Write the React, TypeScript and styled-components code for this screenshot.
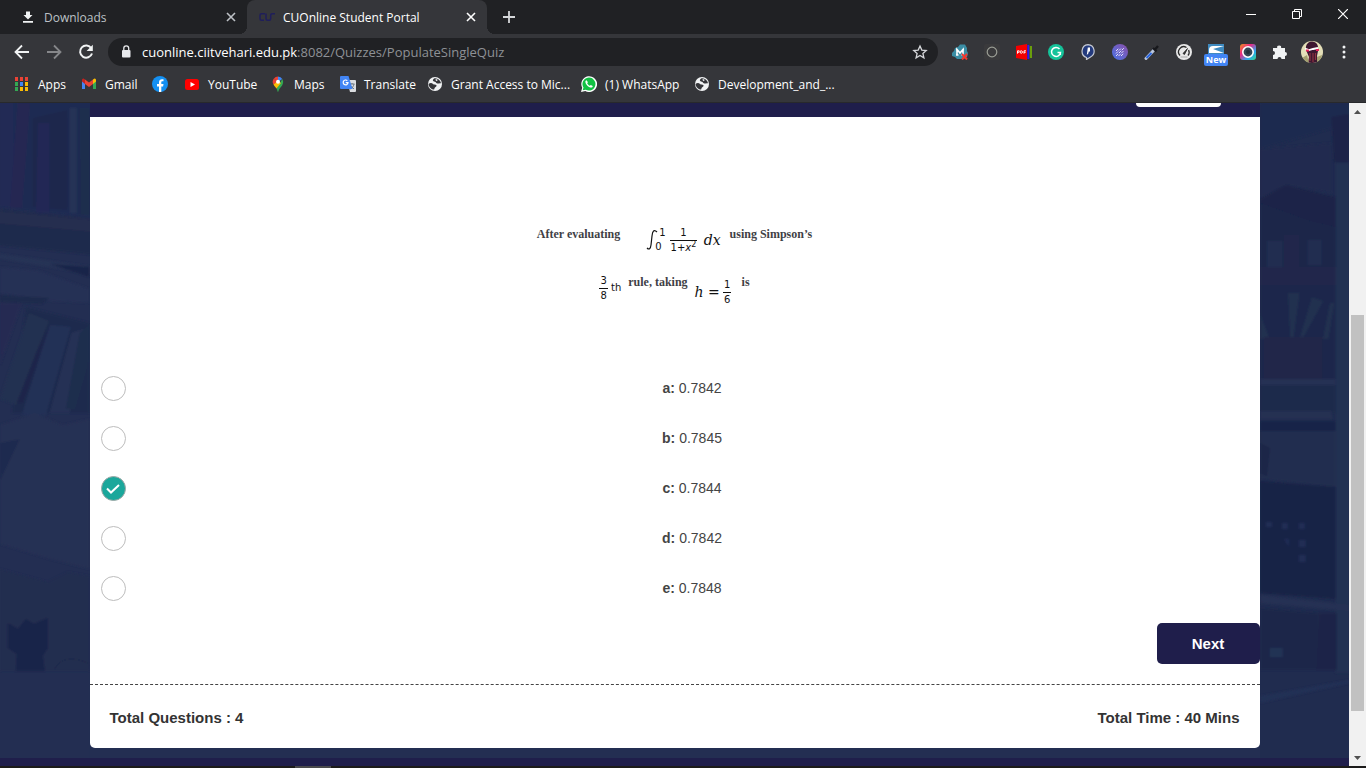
import React, { useState } from "react";
import styled, { createGlobalStyle, css } from "styled-components";

const NAVY = "#1f1e4b";
const UI = `"Open Sans", "Noto Sans", sans-serif`;
const ARIAL = `"Liberation Sans", Arial, sans-serif`;

const Global = createGlobalStyle`
  *, *::before, *::after { box-sizing: border-box; }
  body { margin: 0; background: #35363a; overflow: hidden; }
  button { font: inherit; color: inherit; background: none; border: 0; padding: 0; cursor: pointer; }
  a { color: inherit; text-decoration: none; }
  svg { display: block; flex: none; }
`;

const Window = styled.div`
  display: flex;
  flex-direction: column;
  min-height: 100vh;
  font-family: ${UI};
  font-size: 12px;
  color: #fff;
`;

/* ---------- tab strip ---------- */

const TabStrip = styled.header`
  display: flex;
  align-items: stretch;
  height: 34px;
  background: #202124;
`;

const Tab = styled.div<{ $active?: boolean }>`
  position: relative;
  display: flex;
  align-items: center;
  width: ${(p) => (p.$active ? 240 : 247)}px;
  padding: 0 8px 0 ${(p) => (p.$active ? 12 : 20)}px;
  gap: 8px;
  color: #bdc1c6;
  ${(p) =>
    p.$active &&
    css`
      color: #fff;
      background: #35363a;
      border-radius: 8px 8px 0 0;
      &::before, &::after {
        content: "";
        position: absolute;
        bottom: 0;
        width: 8px;
        height: 8px;
      }
      &::before { left: -8px; background: radial-gradient(circle at 0 0, #202124 8px, #35363a 8px); }
      &::after { right: -8px; background: radial-gradient(circle at 100% 0, #202124 8px, #35363a 8px); }
    `}
`;

const TabTitle = styled.span`
  flex: 1;
  white-space: nowrap;
`;

const IconButton = styled.button<{ $size?: number }>`
  display: grid;
  place-items: center;
  flex: none;
  width: ${(p) => p.$size ?? 16}px;
  height: ${(p) => p.$size ?? 16}px;
`;

const NewTab = styled(IconButton)`
  align-self: center;
  margin-left: 14px;
`;

const WindowButtons = styled.div`
  display: flex;
  align-items: flex-start;
  margin-left: auto;
`;

const WindowButton = styled.button`
  display: grid;
  place-items: center;
  width: 46px;
  height: 28px;
`;

/* ---------- toolbar ---------- */

const Toolbar = styled.div`
  display: flex;
  align-items: center;
  height: 36px;
  padding: 0 10px 0 12px;
`;

const NavButtons = styled.div`
  display: flex;
  gap: 12px;
  padding-right: 12px;
`;

const AddressBar = styled.div`
  position: relative;
  display: flex;
  align-items: center;
  flex: 1;
  height: 28px;
  margin-right: 10px;
  padding: 0 10px 0 10px;
  gap: 8px;
  border-radius: 14px;
  background: #202124;
`;

const Url = styled.a`
  flex: 1;
  font-size: 13px;
  line-height: 20px;
  color: #8e9196;
  white-space: nowrap;
  overflow: hidden;
  b { font-weight: 400; color: #fff; }
`;

const Extensions = styled.div`
  display: flex;
  align-items: center;
  gap: 8px;
`;

const NewBadge = styled.span`
  position: absolute;
  left: 0;
  top: 14px;
  width: 24px;
  height: 12px;
  border-radius: 2px;
  background: #4285f4;
  color: #fff;
  font: 700 9px/12px ${UI};
  text-align: center;
`;

const BadgedButton = styled(IconButton)`
  position: relative;
`;

/* ---------- bookmarks ---------- */

const Bookmarks = styled.nav`
  display: flex;
  align-items: center;
  height: 33px;
  padding: 0 13px 4px;
  border-bottom: 1px solid #28292c;
`;

const Bookmark = styled.a<{ $width: number }>`
  display: flex;
  align-items: center;
  gap: 8px;
  width: ${(p) => p.$width}px;
  height: 28px;
  flex: none;
  white-space: nowrap;
`;

/* ---------- web page ---------- */

const Viewport = styled.div`
  display: flex;
  flex: 1;
  align-items: stretch;
`;

const Page = styled.div`
  display: flex;
  flex-direction: column;
  flex: 1;
  min-width: 0;
  font-family: ${ARIAL};
  background: #232e52;
`;

const Columns = styled.div`
  display: grid;
  grid-template-columns: minmax(0, 1fr) minmax(0, 1170px) minmax(0, 1fr);
  flex: 1;
`;

const Side = styled.div`
  display: grid;
  min-height: 0;
  overflow: hidden;
  contain: size;
  svg { width: 100%; height: 100%; }
`;

const Banner = styled.div`
  display: flex;
  justify-content: flex-end;
  height: 14px;
  padding-right: 39px;
  background: ${NAVY};
`;

const BannerPill = styled.div`
  width: 85px;
  height: 4px;
  border-radius: 0 0 4px 4px;
  background: #fff;
`;

const Card = styled.main`
  display: flex;
  flex-direction: column;
  margin-bottom: 10px;
  padding-top: 101px;
  border-radius: 0 0 5px 5px;
  background: #fff;
  color: #3f3f46;
`;

const Question = styled.div`
  display: flex;
  flex-direction: column;
  align-items: center;
  height: 145px;
  font: 700 12px/16px "Liberation Serif", "Times New Roman", serif;
`;

const QuestionLine = styled.p<{ $gap: number }>`
  display: flex;
  align-items: flex-start;
  gap: ${(p) => p.$gap}px;
  height: 48px;
  margin: 0;
  padding: 8px 0 0;
  white-space: nowrap;
`;

const MathRun = styled.span<{ $height?: number }>`
  display: flex;
  align-items: center;
  height: ${(p) => p.$height ?? 28}px;
  color: #111;
  font: 400 10px/14px "DejaVu Sans", sans-serif;
`;

const Fraction = styled.span`
  display: flex;
  flex-direction: column;
  align-items: center;
  span { padding: 0 1px; }
  span + span { border-top: 1px solid #111; }
  sup { font-size: 8px; line-height: 1px; }
`;

const Limits = styled.span`
  display: flex;
  flex-direction: column;
  justify-content: space-between;
  height: 28px;
  margin-right: 4px;
  span + span { margin-left: -4px; }
`;

const MathItalic = styled.i`
  font: italic 400 14px/18px "DejaVu Serif", serif;
`;

const Options = styled.fieldset`
  margin: 0;
  padding: 0 0 0 11px;
  border: 0;
`;

const Option = styled.label`
  display: flex;
  align-items: center;
  height: 50px;
  cursor: pointer;
`;

const OptionText = styled.span`
  flex: 1;
  text-align: center;
  font-size: 14px;
  line-height: 20px;
  color: #444;
`;

const RadioBox = styled.span`
  position: relative;
  display: block;
  width: 24px;
  height: 24px;
  flex: none;
  svg { position: absolute; left: 5px; top: 8px; pointer-events: none; }
`;

const Radio = styled.input`
  appearance: none;
  display: block;
  width: 25px;
  height: 25px;
  margin: 0;
  border: 1px solid #bdbdbd;
  border-radius: 50%;
  background: #fff;
  &:checked { background: #1ba79b; border-color: #9fa8a6; }
`;

const Actions = styled.div`
  display: flex;
  justify-content: flex-end;
  padding: 10px 0 20px;
  border-bottom: 1px dashed #444;
`;

const NextButton = styled.button`
  width: 103px;
  height: 41px;
  border-radius: 5px;
  background: ${NAVY};
  color: #fff;
  font: 700 15px/20px ${ARIAL};
`;

const Summary = styled.div`
  display: flex;
  justify-content: space-between;
  padding: 22px 20px 20px;
  font-size: 15px;
  line-height: 21px;
  font-weight: 700;
  color: #333;
`;

const PageFooter = styled.footer`
  height: 8px;
  background: ${NAVY};
`;

const Scrollbar = styled.div`
  display: flex;
  flex-direction: column;
  align-items: center;
  width: 17px;
  flex: none;
  background: #f1f1f1;
`;

const ScrollTrack = styled.div`
  display: grid;
  grid-template-rows: 195fr 396fr 38fr;
  flex: 1;
  width: 13px;
`;

const ScrollThumb = styled.div`
  grid-row: 2;
  background: #c1c1c1;
`;

const Taskbar = styled.div`
  display: flex;
  height: 2px;
  padding-left: 295px;
  background: #1c1b1a;
`;

const TaskbarItem = styled.div`
  width: 36px;
  background: #4a4a4c;
`;

/* ---------- icons ---------- */

const CloseIcon = () => (
  <svg width="10" height="10" viewBox="0 0 10 10" stroke="currentColor" strokeWidth="1.6">
    <path d="M1 1l8 8M9 1l-8 8" />
  </svg>
);

const GlobeIcon = () => (
  <svg width="16" height="16" viewBox="0 0 16 16">
    <circle cx="8" cy="8" r="7" fill="#f1f3f4" />
    <path d="M1.500 8C3 6.500 5 6.600 6 8c.8 1 2.600.2 3.300 1 .9 1-.6 1.900-1.300 2.400-.7.600-.4 1.600-1 2.200C4 13.400 1.800 11 1.500 8zM7.500 2.200c-1 .8-2 1.500-1.500 2.600.5 1 1.700.7 2.500 1.300.7.600.8 1.400 1.900 1.400 1.200 0 2.300-.6 3.600-.2C13.500 4.300 10.800 2.100 7.500 2.200z" fill="#35363a" />
    <path d="M8.500 2.800l2.500 1.200-2 1.200z" fill="#f1f3f4" />
  </svg>
);

const AppsIcon = () => {
  const rows = [
    ["#ea4335", "#ea4335", "#ea4335"],
    ["#34a853", "#4285f4", "#fbbc05"],
    ["#34a853", "#fbbc05", "#fbbc05"],
  ];
  return (
    <svg width="17" height="16" viewBox="0 0 17 16">
      {rows.map((row, y) =>
        row.map((c, x) => <rect key={`${x}${y}`} x={2 + x * 5} y={1 + y * 5} width="3" height="4" fill={c} />)
      )}
    </svg>
  );
};

const GmailIcon = () => (
  <svg width="16" height="16" viewBox="0 0 16 16">
    <path d="M1 4v9h3V7z" fill="#4285f4" />
    <path d="M15 4v9h-3V7z" fill="#34a853" />
    <path d="M12 3.500L13.500 2.500Q15 2.300 15 4v1.500L12 8z" fill="#fbbc04" />
    <path d="M4 3.500L2.500 2.500Q1 2.300 1 4v1.500L4 8z" fill="#c5221f" />
    <path d="M4 3.500l4 3 4-3V8l-4 3-4-3z" fill="#ea4335" />
  </svg>
);

const FacebookIcon = () => (
  <svg width="16" height="16" viewBox="0 0 16 16">
    <circle cx="8" cy="8" r="8" fill="#1490f2" />
    <path d="M7 16v-5.600H5V8h2V6.300C7 4.200 8.200 3.200 10 3.200l1.500.1v2h-1c-1 0-1.200.5-1.200 1.200V8h2.200l-.4 2.400H9.300V16z" fill="#fff" />
  </svg>
);

const YouTubeIcon = () => (
  <svg width="16" height="16" viewBox="0 0 16 16">
    <rect x="1" y="3" width="14" height="11" rx="2.500" fill="#f00" />
    <path d="M6.500 6l4.500 2.500L6.500 11z" fill="#fff" />
  </svg>
);

const MapsIcon = () => (
  <svg width="16" height="16" viewBox="0 0 16 16">
    <path d="M8 .5a5.300 5.300 0 0 0-4.100 2L8 6z" fill="#ea4335" />
    <path d="M8 .5V6l4.300-2.900A5.300 5.300 0 0 0 8 .5z" fill="#4285f4" />
    <path d="M3.900 2.500A5.300 5.300 0 0 0 3.500 8.500L8 6z" fill="#ea4335" />
    <path d="M12.300 3.100c1.400 2.200 1 4.400-.2 6.300C10.500 11.600 9 12.500 8.300 15.500c-.1.500-.6.500-.7 0-.2-1-.6-2-1.100-3z" fill="#34a853" />
    <path d="M3.500 8.500c.6 1.400 2 2.600 3 4L11 7 8 5z" fill="#fbbc04" />
    <circle cx="8" cy="5.800" r="2" fill="#fff" />
  </svg>
);

const TranslateIcon = () => (
  <svg width="16" height="16" viewBox="0 0 16 16">
    <path d="M7 4h8a1 1 0 0 1 1 1v10a1 1 0 0 1-1 1H10z" fill="#dadce0" />
    <path d="M9.500 8h5M12 7v1M14 8c-.5 2.500-2 4-3.500 5M10.500 9.500c.7 1.500 2 2.600 3.500 3.300" stroke="#6b7680" fill="none" />
    <path d="M1 0h7.500l4 13H1a1 1 0 0 1-1-1V1a1 1 0 0 1 1-1z" fill="#4285f4" />
    <path d="M7.300 4.700A2.400 2.400 0 1 0 8 6.600H5.700" stroke="#fff" strokeWidth="1.200" fill="none" />
  </svg>
);

const WhatsAppIcon = () => (
  <svg width="16" height="16" viewBox="0 0 16 16">
    <path d="M0 16l1.200-4.200A7.900 7.900 0 1 1 4.300 15z" fill="#fff" />
    <path d="M1.700 14.300l.8-2.700a6.500 6.500 0 1 1 2.200 2.100z" fill="#12c143" />
    <path d="M5.600 4.200c-.6 0-1.300.8-1.200 1.800.2 2.500 3.300 5.500 5.600 5.600 1 0 1.800-.7 1.700-1.700L9.800 8.900l-.9.900C7.900 9.500 6.600 8.100 6.200 7.200l.7-.9z" fill="#fff" />
  </svg>
);

const DownloadIcon = () => (
  <svg width="16" height="16" viewBox="0 0 16 16" fill="#f1f3f4">
    <path d="M6 2.500h4V6h2.500L8 10.500 3.500 6H6zM3 12h10v1.700H3z" />
  </svg>
);

const CuIcon = () => (
  <svg width="16" height="16" viewBox="0 0 16 16" fill="none" stroke="#1f1e5b" strokeWidth="1.500">
    <path d="M6 4.800H2.500Q1 4.800 1 6.300v3.400q0 1.500 1.500 1.500H5M7 4.500v5.200q0 1.500 1.500 1.500h1.700q1.500 0 1.500-1.500V6q0-1.200 1.500-1.200H16" />
  </svg>
);

const BackIcon = ({ dim }: { dim?: boolean }) => (
  <svg width="20" height="20" viewBox="0 0 20 20" fill="none" stroke={dim ? "#86878a" : "#f1f3f4"} strokeWidth="1.800" transform={dim ? "scale(-1 1)" : undefined}>
    <path d="M17 10H4M10 3.500L3.500 10l6.500 6.500" />
  </svg>
);

const ReloadIcon = () => (
  <svg width="20" height="20" viewBox="0 0 20 20">
    <path d="M15.300 6.200A6.100 6.100 0 1 0 16 11.500" fill="none" stroke="#f1f3f4" strokeWidth="2" />
    <path d="M16.800 2.800V9h-6.200z" fill="#f1f3f4" />
  </svg>
);

const LockIcon = () => (
  <svg width="16" height="16" viewBox="0 0 16 16">
    <rect x="4" y="6" width="8.500" height="7.500" rx="1" fill="#e8eaed" />
    <path d="M5.800 6V4.300a2.450 2.450 0 0 1 4.900 0V6" fill="none" stroke="#e8eaed" strokeWidth="1.300" />
  </svg>
);

const StarIcon = () => (
  <svg width="16" height="16" viewBox="0 0 16 16" fill="none" stroke="#d5d7da" strokeWidth="1.300">
    <path d="M8 2l1.800 4.100 4.400.4-3.300 2.900 1 4.400L8 11.500l-3.900 2.300 1-4.400L1.800 6.500l4.400-.4z" />
  </svg>
);

const ext: Record<string, React.ReactNode> = {
  mega: (
    <>
      <path d="M3 4l3-1 2-2.500h5L15 4v3l1 2-1 4-4 2H5l-2-2-3-1v-3l2-2z" fill="#3b8ea5" />
      <path d="M5 11V5.500l3 3.500 3-3.500V11M4 11h2.500M9.500 11H12M4 5.500h1.500M10.500 5.500H12" stroke="#fff" strokeWidth="1.600" fill="none" />
      <path d="M10 10l5 5.500M15 10l-5 5.500" stroke="#f03a2e" strokeWidth="2" />
    </>
  ),
  ring: (
    <>
      <rect width="16" height="16" rx="2" fill="#3a3a3c" />
      <circle cx="8" cy="8" r="4.800" fill="none" stroke="#9a9d94" strokeWidth="1.200" />
    </>
  ),
  pdf: (
    <>
      <path d="M0 2l11-2v16L0 14z" fill="#f40000" />
      <path d="M11.300 1h2v14h-2z" fill="#3b12f0" />
      <path d="M13.700 2H16v12h-2.300z" fill="#6a9e0c" />
      <path d="M1.500 9.700V6.800h1.700v1.500H1.500M4.700 6.800v2.400h1l.8-.7v-1l-.8-.7zM8 9.700V6.800h2M8 8.300h1.700" stroke="#fff" strokeWidth=".9" fill="none" />
    </>
  ),
  grammar: (
    <>
      <circle cx="8" cy="8" r="8" fill="#15c39a" />
      <path d="M11.500 5a4.500 4.500 0 1 0 1 3.500H9.500M12.300 8.500V11" fill="none" stroke="#fff" strokeWidth="1.500" />
    </>
  ),
  pin: (
    <>
      <path d="M8 .7a6.500 6.500 0 0 1 2.500 12.300L6.500 15.500v-2A6.600 6.600 0 0 1 8 .7z" fill="#233a7d" stroke="#c5c9d3" strokeWidth="1.200" />
      <path d="M10 3.500H7.800L6.800 11l1.500-1.500.5-2h1.200z" fill="#fff" />
    </>
  ),
  stripes: (
    <>
      <defs>
        <linearGradient id="violet" x1="0" y1="1" x2="1" y2="0">
          <stop offset="0" stopColor="#4a74e8" />
          <stop offset="1" stopColor="#8a4fa8" />
        </linearGradient>
      </defs>
      <circle cx="8" cy="8" r="8" fill="url(#violet)" />
      <path d="M4 7l3-3M4 9.500L9.500 4M4 12l8-8M6.500 12L12 6.500M9 12l3-3" stroke="#e6e2fa" strokeWidth="1" strokeDasharray="3 1" />
    </>
  ),
  picker: (
    <>
      <path d="M2 14.500L10 6" stroke="#b9c6dc" strokeWidth="3" strokeLinecap="round" />
      <path d="M2.500 14L7.500 9" stroke="#2965e0" strokeWidth="2" />
      <path d="M9 4l3.500 3.500M11 5.500L14 2" stroke="#17181c" strokeWidth="2.400" />
    </>
  ),
  gauge: (
    <>
      <circle cx="8" cy="8" r="8" fill="#e8e8e8" />
      <path d="M4 11.500a5.200 5.200 0 0 1 6.500-8M12.600 6a5.200 5.200 0 0 1-.6 5.500" fill="none" stroke="#2b2b2b" strokeWidth="1.300" />
      <path d="M7 9.500l4.500-5-3 6z" fill="#2b2b2b" stroke="#2b2b2b" strokeWidth=".8" />
      <path d="M4.500 13h7" stroke="#a5a5a5" />
    </>
  ),
  camera: (
    <>
      <defs>
        <linearGradient id="rainbow" x1="0" y1="0" x2="1" y2="1">
          <stop offset="0" stopColor="#f0941c" />
          <stop offset=".35" stopColor="#ec2783" />
          <stop offset=".7" stopColor="#2aa7f0" />
          <stop offset="1" stopColor="#35d98a" />
        </linearGradient>
      </defs>
      <rect width="16" height="16" rx="3" fill="url(#rainbow)" />
      <circle cx="8" cy="8" r="5.200" fill="#344654" stroke="#fff" strokeWidth="1.600" />
      <circle cx="8" cy="8" r="2" fill="#22303a" />
    </>
  ),
  puzzle: (
    <path d="M1 4h4.200a2 2 0 1 1 3.900 0H13v4a2 2 0 1 1 0 4v3H9.500a2 2 0 1 0-4 0H1v-4a2 2 0 1 0 0-4z" fill="#f1f3f4" />
  ),
};

const ExtIcon = ({ name }: { name: string }) => (
  <svg width="16" height="16" viewBox="0 0 16 16">{ext[name]}</svg>
);

const Avatar = () => (
  <svg width="22" height="22" viewBox="0 0 22 22">
    <defs>
      <clipPath id="round"><circle cx="11" cy="11" r="11" /></clipPath>
    </defs>
    <g clipPath="url(#round)">
      <rect width="22" height="22" fill="#e4dfb8" />
      <path d="M5 9C4 2 9 0 11.500.5 17 1 17.500 6 17 10l-1 5 1 7H7l1-6z" fill="#3d1730" />
      <path d="M9 12v8M12 12v9M14.500 12v7" stroke="#8d3340" strokeWidth="1.200" />
      <path d="M4 7.500l4 1.500 4-1 5-1" fill="none" stroke="#fff" strokeWidth="1.800" />
      <path d="M5 9.500h3M15 9h3" stroke="#e8205c" strokeWidth="2" />
      <path d="M1 17l5-3 2 8H3zM16 16l5-2-1 6-4 2z" fill="#a4a070" />
    </g>
  </svg>
);

/* Bookshelf photo, tinted navy, to the left of the card */
const ShelfLeft = () => (
  <svg viewBox="0 0 90 655" preserveAspectRatio="none">
    <defs><filter id="softL"><feGaussianBlur stdDeviation="1" /></filter></defs>
    <rect width="90" height="655" fill="#232e52" />
    <g filter="url(#softL)" opacity=".8">
      <path d="M-5-5H95V115L-5 104z" fill="#1f2b53" />
      <path d="M0 0h14v104H0z" fill="#202957" />
      <path d="M18 0h12l-8 105h-12z" fill="#272753" />
      <path d="M33 15l35-8v100l-35-3z" fill="#1b284c" />
      <path d="M38 20h12v90H36z" fill="#202856" />
      <path d="M70 5h7v105h-7z" fill="#273658" />
      <path d="M80 5h10v107h-9z" fill="#1c2d4e" />
      <path d="M-5 106l100 10v36L-5 142z" fill="#1f294b" />
      <path d="M-5 108l100 9v12L-5 120z" fill="#262d50" />
      <path d="M-5 150l100 14v8L-5 155z" fill="#283456" />
      <path d="M0 164l40 4 50 18v14l-40-2-50-8z" fill="#263256" />
      <path d="M50 161l40 3v10z" fill="#192347" />
      <path d="M0 192l50 3-8 6-42-2z" fill="#1e294c" />
      <path d="M26 204l64 16v90H12z" fill="#1e2a4d" />
      <path d="M0 200h22L0 262z" fill="#262b53" />
      <path d="M29 210l20 8-33 84-16-6z" fill="#243351" />
      <path d="M50 222l21 2-25 88H22z" fill="#243259" />
      <path d="M72 230l18-6-20 86H50z" fill="#273156" />
      <path d="M37 248l14-28-28 80h-6z" fill="#1a2449" />
      <path d="M80 230l10-10v38L76 306H66z" fill="#1b2d4e" />
      <path d="M35 310l28 12 27-6v150l-40-10-50-15V322z" fill="#283154" />
      <path d="M0 340l20-4-20 42z" fill="#1f2b50" />
      <path d="M0 466l48 13 20-10 22 4v95H0z" fill="#222e50" />
      <path d="M8 520l10 6 8-10 8 5 14-6v30l-5 8 2 15H16l1-17-9-6z" fill="#182147" />
      <path d="M55 566c8-15 25-10 35-5" fill="none" stroke="#1b284a" />
    </g>
  </svg>
);

/* Bookshelf photo, tinted navy, to the right of the card */
const ShelfRight = () => (
  <svg viewBox="0 0 90 655" preserveAspectRatio="none">
    <defs><filter id="softR"><feGaussianBlur stdDeviation="1" /></filter></defs>
    <rect width="90" height="655" fill="#202c4f" />
    <g filter="url(#softR)" opacity=".85">
      <path d="M0 0h90v20L0 46z" fill="#1e2b50" />
      <path d="M0 46l72-6v50L26 82 0 95z" fill="#212b4f" />
      <path d="M76 60h14v510H76z" fill="#243053" />
      <path d="M72 14l18-3v48H74z" fill="#1c2447" />
      <path d="M0 96l26-14 50 12v70H0z" fill="#1a2447" />
      <path d="M0 100l50 18 26 6v40H0z" fill="#1a274a" />
      <path d="M7 138h16v26H7zM48 137h14v25H48z" fill="#202e51" />
      <path d="M24 132h16v32H24z" fill="#22284b" />
      <path d="M0 164h76v18H0z" fill="#20284b" />
      <path d="M0 182h76v94H0z" fill="#1b284b" />
      <path d="M0 210l10 26H0zM28 190l2 45h4l6-45M52 194l-12 40h4l20-36M70 200l-7 36h6l6-36" fill="#213050" />
      <path d="M4 234h59v42H4z" fill="#20264a" />
      <path d="M0 276h76v6H0z" fill="#283254" />
      <path d="M0 282h76v28H0z" fill="#1c294c" />
      <path d="M0 308h72v8H0z" fill="#263152" />
      <path d="M0 318h76v10H0z" fill="#192346" />
      <path d="M0 328h76v56L0 376z" fill="#232d50" />
      <path d="M0 340l10 5-3 28-7-3z" fill="#1a2546" />
      <path d="M0 378l76 6v112L0 490z" fill="#182145" />
      <path d="M6 419h6v5H6zM22 420h6v6h-6zM39 420h6v6h-6zM39 437h7v7h-7zM39 452h7v7h-7zM24 436h5v8z" fill="#222f57" />
      <path d="M0 492l90 10v6L0 500z" fill="#273254" />
      <path d="M0 505l60 5v57H0z" fill="#1b2648" />
      <path d="M10 545h13v9H10z" fill="#233456" />
      <path d="M60 510h17v57H57z" fill="#1a2346" />
      <path d="M0 593l90-16v3L0 600z" fill="#243057" />
    </g>
  </svg>
);

const bookmarks: { label: string; width: number; icon: React.ReactNode; name?: string }[] = [
  { label: "Apps", width: 68, icon: <AppsIcon /> },
  { label: "Gmail", width: 71, icon: <GmailIcon /> },
  { label: "", name: "Facebook", width: 32, icon: <FacebookIcon /> },
  { label: "YouTube", width: 86, icon: <YouTubeIcon /> },
  { label: "Maps", width: 70, icon: <MapsIcon /> },
  { label: "Translate", width: 87, icon: <TranslateIcon /> },
  { label: "Grant Access to Mic...", width: 154, icon: <GlobeIcon /> },
  { label: "(1) WhatsApp", width: 113, icon: <WhatsAppIcon /> },
  { label: "Development_and_...", width: 140, icon: <GlobeIcon /> },
];

const answers = [
  ["a", "0.7842"],
  ["b", "0.7845"],
  ["c", "0.7844"],
  ["d", "0.7842"],
  ["e", "0.7848"],
];

export default function App() {
  const [picked, setPicked] = useState("c");
  return (
    <Window>
      <Global />
      <TabStrip>
        <Tab>
          <DownloadIcon />
          <TabTitle>Downloads</TabTitle>
          <IconButton aria-label="Close Downloads"><CloseIcon /></IconButton>
        </Tab>
        <Tab $active>
          <CuIcon />
          <TabTitle>CUOnline Student Portal</TabTitle>
          <IconButton aria-label="Close CUOnline Student Portal"><CloseIcon /></IconButton>
        </Tab>
        <NewTab aria-label="New tab">
          <svg width="12" height="12" viewBox="0 0 12 12" stroke="#d5d7da" strokeWidth="1.800"><path d="M6 0v12M0 6h12" /></svg>
        </NewTab>
        <WindowButtons>
          <WindowButton aria-label="Minimize">
            <svg width="10" height="10" viewBox="0 0 10 10" stroke="#fff"><path d="M0 5.500h10" /></svg>
          </WindowButton>
          <WindowButton aria-label="Restore">
            <svg width="10" height="10" viewBox="0 0 10 10" stroke="#fff" fill="none"><path d="M.5 2.500h7v7h-7zM2.500 2.500v-2h7v7h-2" /></svg>
          </WindowButton>
          <WindowButton aria-label="Close">
            <svg width="10" height="10" viewBox="0 0 10 10" stroke="#fff" strokeWidth="1.200"><path d="M0 0l10 10M10 0L0 10" /></svg>
          </WindowButton>
        </WindowButtons>
      </TabStrip>

      <Toolbar>
        <NavButtons>
          <IconButton $size={20} aria-label="Back"><BackIcon /></IconButton>
          <IconButton $size={20} aria-label="Forward"><BackIcon dim /></IconButton>
          <IconButton $size={20} aria-label="Reload"><ReloadIcon /></IconButton>
        </NavButtons>
        <AddressBar>
          <LockIcon />
          <Url href="#"><b>cuonline.ciitvehari.edu.pk</b>:8082/Quizzes/PopulateSingleQuiz</Url>
          <IconButton aria-label="Bookmark this page"><StarIcon /></IconButton>
        </AddressBar>
        <Extensions>
          {["mega", "ring", "pdf", "grammar", "pin", "stripes", "picker", "gauge"].map((n) => (
            <IconButton key={n} $size={24} aria-label={n}><ExtIcon name={n} /></IconButton>
          ))}
          <BadgedButton $size={24} aria-label="New extension">
            <svg width="16" height="16" viewBox="0 0 16 16">
              <rect width="16" height="16" fill="#3f8abf" />
              <path d="M16 2H5Q1 2 1 6v3h15L5 5z" fill="#fff" />
            </svg>
            <NewBadge>New</NewBadge>
          </BadgedButton>
          <IconButton $size={24} aria-label="Camera"><ExtIcon name="camera" /></IconButton>
          <IconButton $size={24} aria-label="Extensions"><ExtIcon name="puzzle" /></IconButton>
          <IconButton $size={24} aria-label="Profile"><Avatar /></IconButton>
          <IconButton $size={24} aria-label="Menu">
            <svg width="16" height="16" viewBox="0 0 16 16" fill="#f1f3f4"><circle cx="8" cy="3" r="1.500" /><circle cx="8" cy="8" r="1.500" /><circle cx="8" cy="13" r="1.500" /></svg>
          </IconButton>
        </Extensions>
      </Toolbar>

      <Bookmarks>
        {bookmarks.map((b) => (
          <Bookmark key={b.label || b.name} href="#" aria-label={b.name} $width={b.width}>
            {b.icon}
            {b.label}
          </Bookmark>
        ))}
      </Bookmarks>

      <Viewport>
        <Page>
          <Columns>
            <Side><ShelfLeft /></Side>
            <div>
              <Banner><BannerPill /></Banner>
              <Card>
                <Question>
                  <QuestionLine $gap={9}>
                    <span>After evaluating</span>
                    <MathRun>
                      <svg width="30" height="28" viewBox="0 0 30 28" fill="none" stroke="#111" strokeWidth="1.200">
                        <path d="M28 6c-3-3-4.500-1-5 4l-1 9c-.5 4-2 5-4 3" />
                      </svg>
                      <Limits><span>1</span><span>0</span></Limits>
                      <Fraction>
                        <span>1</span>
                        <span>1+<i>x</i><sup>2</sup></span>
                      </Fraction>
                      &nbsp;&nbsp;<MathItalic>dx</MathItalic>
                    </MathRun>
                    <span>using Simpson’s</span>
                  </QuestionLine>
                  <QuestionLine $gap={7}>
                    <MathRun>
                      <Fraction><span>3</span><span>8</span></Fraction>
                      <MathRun $height={18}>&nbsp;th</MathRun>
                    </MathRun>
                    <span>rule, taking</span>
                    <MathRun $height={36}>
                      <MathItalic>h&nbsp;=</MathItalic>&nbsp;
                      <Fraction><span>1</span><span>6</span></Fraction>
                      &nbsp;
                    </MathRun>
                    <span>is</span>
                  </QuestionLine>
                </Question>
                <Options aria-label="Answers">
                  {answers.map(([key, value]) => (
                    <Option key={key}>
                      <RadioBox>
                        <Radio type="radio" name="answer" value={key} checked={picked === key} onChange={() => setPicked(key)} />
                        {picked === key && (
                          <svg width="14" height="10" viewBox="0 0 14 10" fill="none" stroke="#fff" strokeWidth="2"><path d="M1 4.500L5 8.500 13 1" /></svg>
                        )}
                      </RadioBox>
                      <OptionText><b>{key}:</b> {value}</OptionText>
                    </Option>
                  ))}
                </Options>
                <Actions><NextButton>Next</NextButton></Actions>
                <Summary>
                  <span>Total Questions : 4</span>
                  <span>Total Time : 40 Mins</span>
                </Summary>
              </Card>
            </div>
            <Side><ShelfRight /></Side>
          </Columns>
          <PageFooter />
        </Page>
        <Scrollbar>
          <svg width="17" height="17" viewBox="0 0 17 17"><path d="M5 11l3.500-4 3.500 4z" fill="#505050" /></svg>
          <ScrollTrack><ScrollThumb /></ScrollTrack>
          <svg width="17" height="17" viewBox="0 0 17 17"><path d="M5 7l3.500 4L12 7z" fill="#505050" /></svg>
        </Scrollbar>
      </Viewport>
      <Taskbar><TaskbarItem /></Taskbar>
    </Window>
  );
}
